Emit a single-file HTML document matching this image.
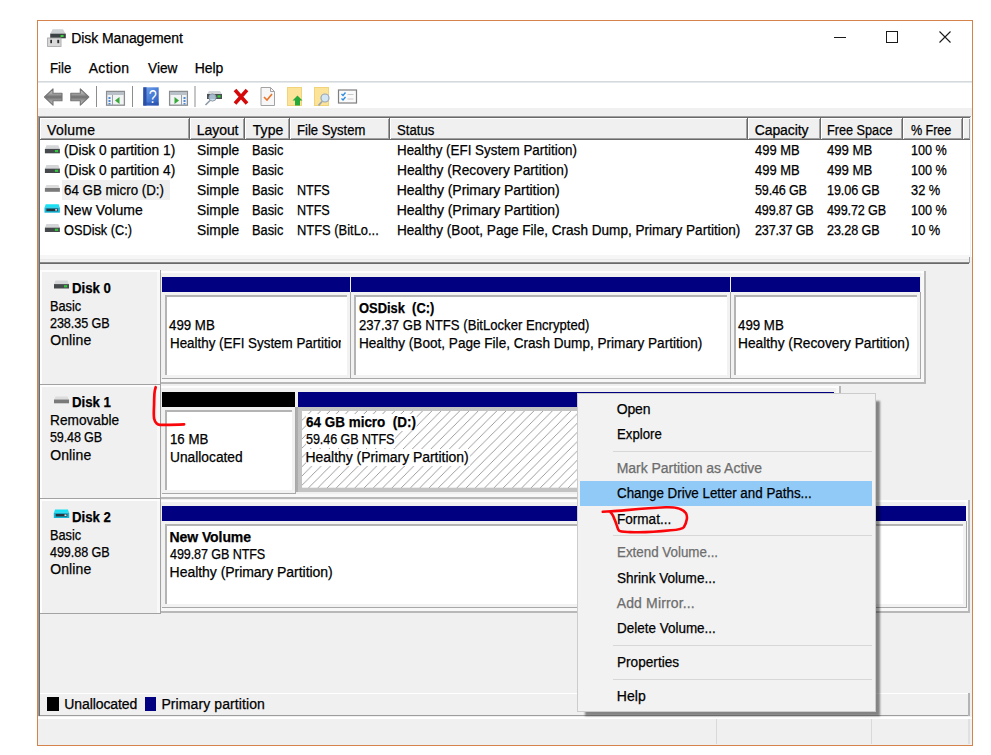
<!DOCTYPE html>
<html><head><meta charset="utf-8"><title>Disk Management</title>
<style>
html,body{margin:0;padding:0;}
body{width:991px;height:755px;position:relative;overflow:hidden;background:#fff;font-family:"Liberation Sans",sans-serif;font-size:14px;color:#000;}
div,span,svg{position:absolute;box-sizing:border-box;}
.t{transform-origin:0 0;white-space:pre;line-height:16px;height:16px;font-size:14px;z-index:5;-webkit-text-stroke:0.25px currentColor;}
.win{left:37px;top:20px;width:936px;height:726px;border:1px solid #d5824c;background:#fff;}
.g{background:#f0f0f0;}
.hl{background:#fff;}
.sh{background:#a0a0a0;}
.dk{background:#696969;}
.hc{background:#f0f0f0;top:118px;height:22px;border-right:1px solid #696969;border-bottom:1px solid #696969;box-shadow:inset 1px 1px 0 #fff, inset -1px -1px 0 #a0a0a0;}
.lab{left:40px;width:121px;height:114px;background:#f0f0f0;border-right:1px solid #a2a2a2;border-bottom:1px solid #a2a2a2;box-shadow:inset 2px 2px 0 #fdfdfd, inset -3px 0 0 #f8f8f8;}
.cont{left:161px;height:113px;background:#f0f0f0;border-right:2px solid #b8b8b8;border-bottom:2px solid #b8b8b8;box-shadow:inset 0 2px 0 #fdfdfd, inset -3px -3px 0 #f8f8f8;}
.bar{height:15px;background:#000080;}
.pbox{height:87px;background:#f2f2f2;border-right:1px solid #a8a8a8;border-bottom:1px solid #a8a8a8;}
.pbox::after{content:"";position:absolute;left:3px;top:3px;right:3px;bottom:3px;background:#fff;border-left:2px solid #b4b4b4;border-top:2px solid #b4b4b4;}
.sbox{height:85px;background:#c3c3c3;box-shadow:inset 2px 0 0 #adadad;}
.menu{left:577px;top:393px;width:299px;height:319px;background:#f2f2f2;border:1px solid #ccc;box-shadow:6px 6px 2px -2px rgba(0,0,0,.45);z-index:10;}
.msep{left:613px;width:259px;height:1px;background:#d7d7d7;z-index:11;}

</style></head>
<body>
<div class="win"></div>
<!-- title icon -->
<svg style="left:40px;top:24px" width="32" height="28" viewBox="40 24 32 28">
  <path d="M52.6 29.2 L63 29.2 L65.8 33.9 L50.2 33.9 Z" fill="#cdd1d3"/>
  <rect x="50.2" y="33.7" width="15.6" height="4.6" fill="#3c4144"/>
  <rect x="60.6" y="35" width="3" height="2" fill="#3ad23f"/>
  <rect x="47.6" y="38" width="13.4" height="8.4" fill="#dadada" stroke="#a6a6a6" stroke-width="0.9"/>
  <rect x="50.3" y="39.8" width="1.7" height="3.4" fill="#2e2e2e"/><rect x="57.3" y="39.8" width="1.9" height="3.4" fill="#2e2e2e"/>
</svg>
<!-- caption buttons -->
<div style="left:834px;top:37px;width:12px;height:1px;background:#1a1a1a"></div>
<div style="left:886px;top:31px;width:12px;height:12px;border:1px solid #1a1a1a"></div>
<svg style="left:938px;top:30px" width="14" height="14" viewBox="0 0 14 14"><path d="M1.5 1.5 L12.5 12.5 M12.5 1.5 L1.5 12.5" stroke="#1a1a1a" stroke-width="1.1" fill="none"/></svg>
<!-- menu line -->
<div style="left:38px;top:81px;width:934px;height:1px;background:#d4d9dc"></div>
<div style="left:38px;top:82px;width:934px;height:1px;background:#e6e9eb"></div>
<!-- toolbar icons -->
<svg style="left:38px;top:83px" width="340" height="26" viewBox="38 83 340 26">
  <defs>
    <linearGradient id="ag" x1="0" y1="0" x2="0" y2="1"><stop offset="0" stop-color="#c6c6c6"/><stop offset="0.3" stop-color="#a6a6a6"/><stop offset="0.5" stop-color="#6f6f6f"/><stop offset="0.7" stop-color="#9c9c9c"/><stop offset="1" stop-color="#c0c0c0"/></linearGradient>
  </defs>
  <path d="M44.5 97 L53 88.8 L53 93.3 L62 93.3 L62 100.7 L53 100.7 L53 105.2 Z" fill="url(#ag)" stroke="#747474" stroke-width="1.1" stroke-linejoin="round"/>
  <path d="M88.8 97 L80.3 88.8 L80.3 93.3 L70.8 93.3 L70.8 100.7 L80.3 100.7 L80.3 105.2 Z" fill="url(#ag)" stroke="#747474" stroke-width="1.1" stroke-linejoin="round"/>
  <rect x="96" y="86" width="1" height="21" fill="#8d8d8d"/>
  <rect x="132" y="86" width="1" height="21" fill="#8d8d8d"/>
  <rect x="194.5" y="86" width="1" height="21" fill="#8d8d8d"/>
  <!-- console tree icon -->
  <g>
    <rect x="106.6" y="91.4" width="17.8" height="13.8" fill="#f1f3f5" stroke="#8a8d90" stroke-width="1.3"/>
    <rect x="107" y="92" width="17" height="3" fill="#b9c0c8"/>
    <rect x="112" y="95" width="1" height="10" fill="#9aa0a6"/>
    <rect x="108.5" y="97" width="2" height="2" fill="#4a8ad8"/><rect x="108.5" y="100" width="2" height="2" fill="#4a8ad8"/><rect x="108.5" y="103" width="2" height="1.5" fill="#4a8ad8"/>
    <path d="M119.5 97 L119.5 104 L115 100.5 Z" fill="#3aa838"/>
  </g>
  <!-- help -->
  <g>
    <linearGradient id="hg" x1="0" y1="0" x2="1" y2="1"><stop offset="0" stop-color="#7aa7ea"/><stop offset="0.5" stop-color="#4a7fd8"/><stop offset="1" stop-color="#2858b8"/></linearGradient>
    <rect x="143.3" y="87.3" width="15.4" height="18.2" fill="url(#hg)"/>
    <rect x="143.3" y="87.3" width="3.2" height="18.2" fill="#2b4fa6"/>
    <rect x="143.3" y="102.5" width="15.4" height="3" fill="#2a50a8" opacity=".6"/>
    <text transform="translate(152.7 102.7) scale(.8 1)" font-family="Liberation Sans, sans-serif" font-size="18" fill="#fff" text-anchor="middle">?</text>
  </g>
  <!-- action pane icon -->
  <g>
    <rect x="169.6" y="91.4" width="17.8" height="13.8" fill="#f1f3f5" stroke="#8a8d90" stroke-width="1.3"/>
    <rect x="170" y="92" width="17" height="3" fill="#b9c0c8"/>
    <rect x="181" y="95" width="1" height="10" fill="#9aa0a6"/>
    <rect x="183.5" y="97" width="2" height="2" fill="#4a8ad8"/><rect x="183.5" y="100" width="2" height="2" fill="#4a8ad8"/><rect x="183.5" y="103" width="2" height="1.5" fill="#4a8ad8"/>
    <path d="M174.5 97 L174.5 104 L179 100.5 Z" fill="#3aa838"/>
  </g>
  <!-- drive + magnifier -->
  <g>
    <path d="M209 91 L220 91 L222 94 L207 94 Z" fill="#d5d8da"/>
    <rect x="207" y="94" width="15" height="5" fill="#4a4f52"/>
    <rect x="217.5" y="95.3" width="3" height="2.2" fill="#35d13c"/>
    <circle cx="212.5" cy="97.5" r="3.6" fill="#bcd6ee" fill-opacity=".8" stroke="#8d99a5" stroke-width="1"/>
    <path d="M210 100.5 L205.5 105" stroke="#8d99a5" stroke-width="1.6"/>
  </g>
  <!-- red X -->
  <path d="M235 90 L247 103.5 M247 90 L235 103.5" stroke="#d40a0a" stroke-width="3.6" fill="none"/>
  <!-- document check -->
  <g>
    <path d="M261 87.5 L270.5 87.5 L274.5 91.5 L274.5 105.5 L261 105.5 Z" fill="#f7f7f7" stroke="#a3a3a3"/>
    <path d="M270.5 87.5 L270.5 91.5 L274.5 91.5" fill="none" stroke="#a3a3a3"/>
    <path d="M264 97 L267 100 L272 94" fill="none" stroke="#e9742a" stroke-width="1.6"/>
  </g>
  <!-- folder up -->
  <g>
    <rect x="287.5" y="87.5" width="14" height="18" fill="#fbe39a" stroke="#f3d37a"/>
    <path d="M297.5 95.5 L302.5 100.5 L300 100.5 L300 105.5 L295 105.5 L295 100.5 L292.5 100.5 Z" fill="#27a83a"/>
  </g>
  <!-- folder search -->
  <g>
    <rect x="314.5" y="87.5" width="14" height="18" fill="#fbe39a" stroke="#f3d37a"/>
    <circle cx="325" cy="98" r="4" fill="#d3e6f5" stroke="#9aa7b3" stroke-width="1.2"/>
    <path d="M322 101.5 L318.5 105.5" stroke="#9aa7b3" stroke-width="1.8"/>
  </g>
  <!-- checklist -->
  <g>
    <rect x="338.5" y="90" width="18" height="13" fill="#fafafa" stroke="#7f7f7f" stroke-width="1.2"/>
    <path d="M341.5 94 L343 95.5 L345.5 92.5 M341.5 98.5 L343 100 L345.5 97" fill="none" stroke="#2c8be0" stroke-width="1.3"/>
    <path d="M347.5 94.5 L353.5 94.5 M347.5 99 L353.5 99" stroke="#c9c9c9" stroke-width="1"/>
  </g>
</svg>
<!-- gray strip under toolbar and general client background -->
<div class="g" style="left:38px;top:108px;width:934px;height:637px"></div>
<!-- list view sunken border -->
<div class="sh" style="left:38px;top:116px;width:933px;height:1px"></div>
<div class="dk" style="left:39px;top:117px;width:931px;height:1px"></div>
<div class="hl" style="left:40px;top:118px;width:930px;height:137px"></div>
<div class="hl" style="left:971px;top:116px;width:1px;height:141px"></div>
<div style="left:40px;top:255px;width:930px;height:4px;background:#f6f6f6"></div>
<div style="left:40px;top:259px;width:930px;height:1px;background:#e9e9e9"></div>
<div style="left:38px;top:116px;width:1px;height:600px;background:#9a9a9a;z-index:3"></div>
<div style="left:39px;top:117px;width:1px;height:599px;background:#6e6e6e;z-index:3"></div>
<!-- header cells -->
<div class="hc" style="left:40px;width:150px"></div>
<div class="hc" style="left:190px;width:55px"></div>
<div class="hc" style="left:245px;width:45px"></div>
<div class="hc" style="left:290px;width:100px"></div>
<div class="hc" style="left:390px;width:358px"></div>
<div class="hc" style="left:748px;width:73px"></div>
<div class="hc" style="left:821px;width:82px"></div>
<div class="hc" style="left:903px;width:60px"></div>
<div class="hc" style="left:963px;width:7px;border-right:none"></div>
<!-- selected row highlight -->
<div style="left:62px;top:180px;width:108px;height:20px;background:#efefef"></div>
<!-- row icons -->
<svg style="left:44px;top:140px" width="17" height="100" viewBox="0 0 17 100">
  <defs><g id="dk"><path d="M2 0 L14 0 L15.3 3.6 L0.7 3.6 Z" fill="#d4d6d8"/><rect x="0.5" y="3.6" width="15" height="4.4" fill="#45494c"/><rect x="10.5" y="4.7" width="3.2" height="2.2" fill="#2fc83a"/></g>
  <g id="dkr"><path d="M2 0 L14 0 L15.3 3 L0.7 3 Z" fill="#dcdcdc"/><rect x="0.5" y="3" width="15" height="3.8" fill="#7a7a7a"/></g>
  <g id="dkb"><path d="M1.5 0 L14.5 0 L15.5 3.2 L0.5 3.2 Z" fill="#19e0f2"/><rect x="0.3" y="3.2" width="15.4" height="5.3" fill="#12b6d6"/><rect x="2.2" y="4.4" width="11.6" height="2.6" fill="#26333d"/><rect x="11" y="5" width="2" height="1.4" fill="#e8f8ff"/></g></defs>
  <use href="#dk" x="0.4" y="5.3"/><use href="#dk" x="0.4" y="25"/><use href="#dkr" x="0.4" y="45"/><use href="#dkb" x="0.2" y="64.2"/><use href="#dk" x="0.4" y="84"/>
</svg>
<!-- splitter -->
<div style="left:40px;top:262px;width:930px;height:1px;background:#8a8a8a"></div>
<div style="left:40px;top:263px;width:929px;height:1px;background:#696969"></div>
<div class="sh" style="left:969px;top:257px;width:1px;height:6px"></div>
<!-- Disk rows -->
<svg width="0" height="0"><defs><pattern id="hatch" width="9.27" height="9.27" patternUnits="userSpaceOnUse"><rect width="10" height="10" fill="#fff"/><path d="M-1 10.27 L10.27 -1 M-1 1 L1 -1 M8.27 10.27 L10.27 8.27" stroke="#8c8c8c" stroke-width="0.85"/></pattern></defs></svg>
<div class="lab" style="top:270px;height:115px"></div>
<div class="cont" style="top:271px;width:765px"></div>
<div class="bar" style="left:162px;top:277px;width:188px;background:#000080"></div>
<div class="pbox" style="left:162px;top:292px;width:189px"></div>
<div class="bar" style="left:351px;top:277px;width:379px;background:#000080"></div>
<div class="pbox" style="left:351px;top:292px;width:380px"></div>
<div class="bar" style="left:731px;top:277px;width:189px;background:#000080"></div>
<div class="pbox" style="left:731px;top:292px;width:190px"></div>
<div class="lab" style="top:385px"></div>
<div class="cont" style="top:386px;width:680px"></div>
<div class="bar" style="left:162px;top:392px;width:133px;background:#000"></div>
<div class="pbox" style="left:162px;top:407px;width:134px"></div>
<div class="bar" style="left:298px;top:392px;width:536px;background:#000080"></div>
<div class="sbox" style="left:296px;top:407px;width:541px"><svg width="530.5" height="76.7" style="left:5.5px;top:4px"><rect width="100%" height="100%" fill="url(#hatch)"/></svg></div>
<div class="lab" style="top:499px;height:115px"></div>
<div class="cont" style="top:500px;width:809px"></div>
<div class="bar" style="left:162px;top:506px;width:804px;background:#000080"></div>
<div class="pbox" style="left:162px;top:521px;width:805px"></div>
<svg style="left:53px;top:280px" width="17" height="242" viewBox="0 0 17 242">
  <use href="#dk" x="0.5" y="0.5"/><use href="#dkr" x="0.5" y="116.5"/><use href="#dkb" x="0.5" y="229.5"/>
</svg>
<!-- legend -->
<div class="hl" style="left:40px;top:693px;width:930px;height:1px"></div>
<div style="left:47px;top:697px;width:12px;height:14px;background:#000"></div>
<div style="left:144.6px;top:697px;width:11.6px;height:14px;background:#000080"></div>
<div style="left:40px;top:715px;width:930px;height:1px;background:#9c9c9c"></div>
<div class="hl" style="left:38px;top:717px;width:934px;height:2px"></div>
<div style="left:968px;top:693px;width:2px;height:23px;background:#b4b4b4"></div>
<!-- status bar -->
<div style="left:716px;top:719px;width:1px;height:25px;background:#d9d9d9"></div>
<div style="left:871px;top:719px;width:1px;height:25px;background:#d9d9d9"></div>
<div style="left:968px;top:719px;width:2px;height:25px;background:#e0e0e0"></div>
<!-- context menu -->
<div class="menu"></div>
<div style="left:580px;top:481px;width:292px;height:25px;background:#91c9f7;z-index:11"></div>
<div class="msep" style="top:451px"></div>
<div class="msep" style="top:535px"></div>
<div class="msep" style="top:645px"></div>
<div class="msep" style="top:679px"></div>
<!-- red annotations -->
<svg style="left:0;top:0;z-index:30" width="991" height="755" viewBox="0 0 991 755">
  <path d="M155.7 387.2 C154.8 390 154.5 392 154.4 394 C154.2 398 154.1 401 154.1 404.1 C154 407 153.8 410 153.8 413.1 C153.8 415 153.8 417 154.1 418.6 C154.6 421 155.3 422.6 156.7 423.5 C157.6 424.3 158.6 424.7 160 424.8 C168 424.9 176 424.6 184.1 424.4" fill="none" stroke="#fa0509" stroke-width="2.7" stroke-linecap="round" stroke-linejoin="round"/>
  <path d="M602.8 511.8 L611 511.3 C625 510.3 645 508.4 665.6 507.3 C672 507 682 508 685.8 513 C688 516 687 522 683.8 527.2 C682 529.5 675 530 670.7 530.3 C655 532 640 532.6 630.3 532.1 C625 531.8 620.5 531.8 619.2 530.8 C617.5 529 617.5 527 616.7 525.2 C615.7 522 614.5 519.5 613.7 517.2 C612.8 515 611.5 513.5 610.6 512.2" fill="none" stroke="#fa0509" stroke-width="2.6" stroke-linecap="round" stroke-linejoin="round"/>
</svg>

<span class="t" style="left:71.3px;top:30px;letter-spacing:-0.09px;">Disk Management</span>
<span class="t" style="left:49.5px;top:60px;letter-spacing:0.0px;transform:scaleX(0.940);">File</span>
<span class="t" style="left:88.7px;top:60px;letter-spacing:0.3px;">Action</span>
<span class="t" style="left:147.5px;top:60px;letter-spacing:0.0px;transform:scaleX(0.977);">View</span>
<span class="t" style="left:194.8px;top:60px;letter-spacing:-0.1px;">Help</span>
<span class="t" style="left:47.1px;top:122px;letter-spacing:0.24px;">Volume</span>
<span class="t" style="left:196.8px;top:122px;letter-spacing:-0.07px;">Layout</span>
<span class="t" style="left:252.7px;top:122px;letter-spacing:0.08px;">Type</span>
<span class="t" style="left:297.0px;top:122px;letter-spacing:0.0px;transform:scaleX(0.934);">File System</span>
<span class="t" style="left:396.8px;top:122px;letter-spacing:0.0px;transform:scaleX(0.939);">Status</span>
<span class="t" style="left:754.7px;top:122px;letter-spacing:-0.1px;">Capacity</span>
<span class="t" style="left:827.4px;top:122px;letter-spacing:0.0px;transform:scaleX(0.906);">Free Space</span>
<span class="t" style="left:910.5px;top:122px;letter-spacing:-0.09px;transform:scaleX(0.900);">% Free</span>
<span class="t" style="left:63.7px;top:142px;letter-spacing:0.0px;transform:scaleX(0.979);">(Disk 0 partition 1)</span>
<span class="t" style="left:196.8px;top:142px;letter-spacing:0.0px;transform:scaleX(0.984);">Simple</span>
<span class="t" style="left:252.0px;top:142px;letter-spacing:0.0px;transform:scaleX(0.914);">Basic</span>
<span class="t" style="left:396.8px;top:142px;letter-spacing:0.0px;transform:scaleX(0.956);">Healthy (EFI System Partition)</span>
<span class="t" style="left:754.7px;top:142px;letter-spacing:0.0px;transform:scaleX(0.924);">499 MB</span>
<span class="t" style="left:827.4px;top:142px;letter-spacing:0.0px;transform:scaleX(0.939);">499 MB</span>
<span class="t" style="left:910.5px;top:142px;letter-spacing:0.0px;transform:scaleX(0.902);">100 %</span>
<span class="t" style="left:63.7px;top:162px;letter-spacing:0.0px;transform:scaleX(0.979);">(Disk 0 partition 4)</span>
<span class="t" style="left:196.8px;top:162px;letter-spacing:0.0px;transform:scaleX(0.984);">Simple</span>
<span class="t" style="left:252.0px;top:162px;letter-spacing:0.0px;transform:scaleX(0.914);">Basic</span>
<span class="t" style="left:396.8px;top:162px;letter-spacing:0.0px;transform:scaleX(0.979);">Healthy (Recovery Partition)</span>
<span class="t" style="left:754.7px;top:162px;letter-spacing:0.0px;transform:scaleX(0.924);">499 MB</span>
<span class="t" style="left:827.4px;top:162px;letter-spacing:0.0px;transform:scaleX(0.939);">499 MB</span>
<span class="t" style="left:910.5px;top:162px;letter-spacing:0.0px;transform:scaleX(0.902);">100 %</span>
<span class="t" style="left:63.7px;top:182px;letter-spacing:0.0px;transform:scaleX(0.952);">64 GB micro (D:)</span>
<span class="t" style="left:196.8px;top:182px;letter-spacing:0.0px;transform:scaleX(0.984);">Simple</span>
<span class="t" style="left:252.0px;top:182px;letter-spacing:0.0px;transform:scaleX(0.914);">Basic</span>
<span class="t" style="left:297.0px;top:182px;letter-spacing:-0.08px;transform:scaleX(0.900);">NTFS</span>
<span class="t" style="left:396.8px;top:182px;letter-spacing:-0.05px;">Healthy (Primary Partition)</span>
<span class="t" style="left:754.7px;top:182px;letter-spacing:-0.21px;transform:scaleX(0.900);">59.46 GB</span>
<span class="t" style="left:827.4px;top:182px;letter-spacing:-0.1px;transform:scaleX(0.900);">19.06 GB</span>
<span class="t" style="left:910.5px;top:182px;letter-spacing:0.0px;transform:scaleX(0.918);">32 %</span>
<span class="t" style="left:63.7px;top:202px;letter-spacing:0.05px;">New Volume</span>
<span class="t" style="left:196.8px;top:202px;letter-spacing:0.0px;transform:scaleX(0.984);">Simple</span>
<span class="t" style="left:252.0px;top:202px;letter-spacing:0.0px;transform:scaleX(0.914);">Basic</span>
<span class="t" style="left:297.0px;top:202px;letter-spacing:-0.08px;transform:scaleX(0.900);">NTFS</span>
<span class="t" style="left:396.8px;top:202px;letter-spacing:-0.05px;">Healthy (Primary Partition)</span>
<span class="t" style="left:754.7px;top:202px;letter-spacing:-0.21px;transform:scaleX(0.900);">499.87 GB</span>
<span class="t" style="left:827.4px;top:202px;letter-spacing:-0.16px;transform:scaleX(0.900);">499.72 GB</span>
<span class="t" style="left:910.5px;top:202px;letter-spacing:0.0px;transform:scaleX(0.902);">100 %</span>
<span class="t" style="left:63.7px;top:222px;letter-spacing:0.0px;transform:scaleX(0.911);">OSDisk (C:)</span>
<span class="t" style="left:196.8px;top:222px;letter-spacing:0.0px;transform:scaleX(0.984);">Simple</span>
<span class="t" style="left:252.0px;top:222px;letter-spacing:0.0px;transform:scaleX(0.914);">Basic</span>
<span class="t" style="left:297.0px;top:222px;letter-spacing:0.0px;transform:scaleX(0.922);">NTFS (BitLo...</span>
<span class="t" style="left:396.8px;top:222px;letter-spacing:0.0px;transform:scaleX(0.970);">Healthy (Boot, Page File, Crash Dump, Primary Partition)</span>
<span class="t" style="left:754.7px;top:222px;letter-spacing:-0.21px;transform:scaleX(0.900);">237.37 GB</span>
<span class="t" style="left:827.4px;top:222px;letter-spacing:-0.1px;transform:scaleX(0.900);">23.28 GB</span>
<span class="t" style="left:910.5px;top:222px;letter-spacing:0.0px;transform:scaleX(0.918);">10 %</span>
<span class="t" style="left:71.7px;top:280px;letter-spacing:0.0px;transform:scaleX(0.945);font-weight:bold;">Disk 0</span>
<span class="t" style="left:50.2px;top:298px;letter-spacing:0.0px;transform:scaleX(0.911);">Basic</span>
<span class="t" style="left:50.2px;top:315px;letter-spacing:-0.09px;transform:scaleX(0.900);">238.35 GB</span>
<span class="t" style="left:50.2px;top:332px;letter-spacing:0.11px;">Online</span>
<span class="t" style="left:71.7px;top:394px;letter-spacing:0.0px;transform:scaleX(0.945);font-weight:bold;">Disk 1</span>
<span class="t" style="left:50.2px;top:412px;letter-spacing:0.0px;transform:scaleX(0.977);">Removable</span>
<span class="t" style="left:50.2px;top:429px;letter-spacing:-0.17px;transform:scaleX(0.900);">59.48 GB</span>
<span class="t" style="left:50.2px;top:447px;letter-spacing:0.11px;">Online</span>
<span class="t" style="left:71.7px;top:509px;letter-spacing:0.0px;transform:scaleX(0.945);font-weight:bold;">Disk 2</span>
<span class="t" style="left:50.2px;top:527px;letter-spacing:0.0px;transform:scaleX(0.911);">Basic</span>
<span class="t" style="left:50.2px;top:544px;letter-spacing:-0.09px;transform:scaleX(0.900);">499.88 GB</span>
<span class="t" style="left:50.2px;top:561px;letter-spacing:0.11px;">Online</span>
<span class="t" style="left:169.1px;top:317px;letter-spacing:0.0px;transform:scaleX(0.949);">499 MB</span>
<span class="t" style="left:169.6px;top:335px;letter-spacing:0.0px;transform:scaleX(0.956);width:179.4px;overflow:hidden;">Healthy (EFI System Partition)</span>
<span class="t" style="left:359.0px;top:300px;letter-spacing:0.0px;transform:scaleX(0.922);font-weight:bold;">OSDisk  (C:)</span>
<span class="t" style="left:359.0px;top:317px;letter-spacing:0.0px;transform:scaleX(0.937);">237.37 GB NTFS (BitLocker Encrypted)</span>
<span class="t" style="left:359.0px;top:335px;letter-spacing:0.0px;transform:scaleX(0.970);">Healthy (Boot, Page File, Crash Dump, Primary Partition)</span>
<span class="t" style="left:738.2px;top:317px;letter-spacing:0.0px;transform:scaleX(0.949);">499 MB</span>
<span class="t" style="left:738.2px;top:335px;letter-spacing:0.0px;transform:scaleX(0.980);">Healthy (Recovery Partition)</span>
<span class="t" style="left:170.1px;top:431px;letter-spacing:0.0px;transform:scaleX(0.946);">16 MB</span>
<span class="t" style="left:170.1px;top:449px;letter-spacing:0.0px;transform:scaleX(0.983);">Unallocated</span>
<span class="t" style="left:305.5px;top:414px;letter-spacing:0.0px;transform:scaleX(0.962);font-weight:bold;background:#fff;height:17.4px;padding-right:1px;">64 GB micro  (D:)</span>
<span class="t" style="left:305.5px;top:431px;letter-spacing:-0.11px;transform:scaleX(0.900);background:#fff;height:17.4px;padding-right:1px;">59.46 GB NTFS</span>
<span class="t" style="left:305.5px;top:449px;letter-spacing:-0.04px;background:#fff;height:17.4px;padding-right:1px;">Healthy (Primary Partition)</span>
<span class="t" style="left:169.6px;top:529px;letter-spacing:-0.09px;font-weight:bold;">New Volume</span>
<span class="t" style="left:169.6px;top:546px;letter-spacing:-0.12px;transform:scaleX(0.900);">499.87 GB NTFS</span>
<span class="t" style="left:169.6px;top:564px;letter-spacing:-0.04px;">Healthy (Primary Partition)</span>
<span class="t" style="left:64.3px;top:696px;letter-spacing:-0.1px;">Unallocated</span>
<span class="t" style="left:161.4px;top:696px;letter-spacing:0.1px;">Primary partition</span>
<span class="t" style="left:616.7px;top:401px;letter-spacing:-0.15px;z-index:20;">Open</span>
<span class="t" style="left:616.7px;top:426px;letter-spacing:0.0px;transform:scaleX(0.942);z-index:20;">Explore</span>
<span class="t" style="left:616.7px;top:460px;letter-spacing:-0.04px;color:#6d6d6d;z-index:20;">Mark Partition as Active</span>
<span class="t" style="left:616.7px;top:485px;letter-spacing:0.0px;transform:scaleX(0.955);z-index:20;">Change Drive Letter and Paths...</span>
<span class="t" style="left:616.7px;top:511px;letter-spacing:0.0px;transform:scaleX(0.968);z-index:20;">Format...</span>
<span class="t" style="left:616.7px;top:544px;letter-spacing:0.0px;transform:scaleX(0.955);color:#6d6d6d;z-index:20;">Extend Volume...</span>
<span class="t" style="left:616.7px;top:570px;letter-spacing:0.0px;transform:scaleX(0.969);z-index:20;">Shrink Volume...</span>
<span class="t" style="left:616.7px;top:595px;letter-spacing:0.15px;color:#6d6d6d;z-index:20;">Add Mirror...</span>
<span class="t" style="left:616.7px;top:620px;letter-spacing:0.0px;transform:scaleX(0.962);z-index:20;">Delete Volume...</span>
<span class="t" style="left:616.7px;top:654px;letter-spacing:0.0px;transform:scaleX(0.973);z-index:20;">Properties</span>
<span class="t" style="left:616.7px;top:688px;letter-spacing:0.13px;z-index:20;">Help</span>
</body></html>
